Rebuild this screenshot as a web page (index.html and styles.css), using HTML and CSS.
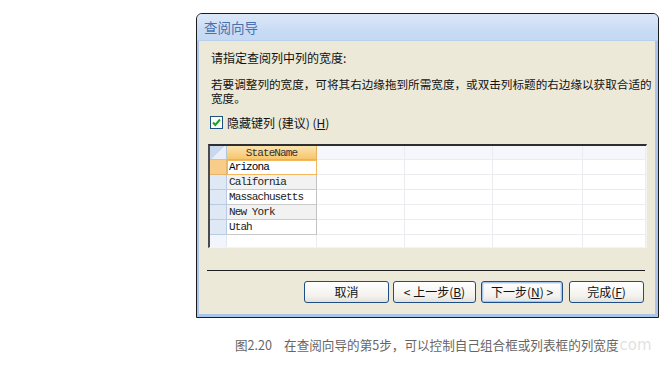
FILE: index.html
```html
<!DOCTYPE html>
<html lang="zh-CN">
<head>
  <meta charset="UTF-8">
  <title>查阅向导</title>
  <link rel="stylesheet" href="styles.css">
</head>
<body>

<div class="page">
  <div class="dialog">
    <div class="titlebar">查阅向导</div>
    <div class="content">
      <p class="line1">请指定查阅列中列的宽度:</p>
      <p class="line2">若要调整列的宽度，可将其右边缘拖到所需宽度，或双击列标题的右边缘以获取合适的<br>宽度。</p>

      <div class="check-row">
        <span class="checkbox">
          <svg width="11" height="11" viewBox="0 0 11 11"><path d="M2 5.5 L4.3 8 L9 2.5" fill="none" stroke="#21a121" stroke-width="2"/></svg>
        </span>
        <span>隐藏键列 (建议) (<u>H</u>)</span>
      </div>

      <div class="grid">
        <div class="row head">
          <div class="cell sel corner"></div>
          <div class="cell c1 colhead">StateName</div>
          <div class="cell c2"></div>
          <div class="cell c3"></div>
          <div class="cell c4"></div>
          <div class="cell c5"></div>
        </div>
        <div class="row">
          <div class="cell sel current"></div>
          <div class="cell c1 data active">Arizona</div>
          <div class="cell c2"></div><div class="cell c3"></div><div class="cell c4"></div><div class="cell c5"></div>
        </div>
        <div class="row">
          <div class="cell sel"></div>
          <div class="cell c1 data alt">California</div>
          <div class="cell c2"></div><div class="cell c3"></div><div class="cell c4"></div><div class="cell c5"></div>
        </div>
        <div class="row">
          <div class="cell sel"></div>
          <div class="cell c1 data">Massachusetts</div>
          <div class="cell c2"></div><div class="cell c3"></div><div class="cell c4"></div><div class="cell c5"></div>
        </div>
        <div class="row">
          <div class="cell sel"></div>
          <div class="cell c1 data alt">New York</div>
          <div class="cell c2"></div><div class="cell c3"></div><div class="cell c4"></div><div class="cell c5"></div>
        </div>
        <div class="row">
          <div class="cell sel"></div>
          <div class="cell c1 data">Utah</div>
          <div class="cell c2"></div><div class="cell c3"></div><div class="cell c4"></div><div class="cell c5"></div>
        </div>
        <div class="row">
          <div class="cell sel blank"></div>
          <div class="cell c1"></div>
          <div class="cell c2"></div><div class="cell c3"></div><div class="cell c4"></div><div class="cell c5"></div>
        </div>
      </div>

      <div class="separator"></div>

      <div class="buttons">
        <button class="btn b-cancel">取消</button>
        <button class="btn b-back">&lt; 上一步(<u>B</u>)</button>
        <button class="btn b-next focus">下一步(<u>N</u>) &gt;</button>
        <button class="btn b-finish">完成(<u>F</u>)</button>
      </div>
    </div>
  </div>

  <p class="caption">图2.20<span class="gap"></span>在查阅向导的第5步，可以控制自己组合框或列表框的列宽度<span class="mark">com</span></p>
</div>

</body>
</html>
```

FILE: styles.css
```css
body {
  margin: 0;
  background: #ffffff;
  font-family: "Noto Sans CJK SC", "DejaVu Sans", sans-serif;
}
.page {
  padding: 13px 0 0 196px;
}
.dialog {
  width: 456px;
  border: 1px solid #1c1c1c;
  border-radius: 6px 6px 0 0;
  background: #a9c5ec;
  padding: 0 3px 3px 2px;
}
.titlebar {
  height: 26px;
  margin: 0 -3px 0 -2px;
  padding-left: 7px;
  border-radius: 5px 5px 0 0;
  border-bottom: 1px solid #b8cfee;
  background: linear-gradient(#dce8f9, #cadcf5 60%, #c5d9f3);
  color: #4a70ae;
  font-size: 13.5px;
  line-height: 27px;
}
.content {
  height: 273px;
  background: #ece9d8;
  color: #111;
  font-size: 12px;
  overflow: hidden;
}
.content p {
  margin: 0;
  line-height: 14px;
}
.line1 {
  padding: 10px 0 0 12px;
}
.line2 {
  padding: 12px 0 0 12px;
  font-size: 11.6px;
  line-height: 14px;
}
.check-row {
  display: flex;
  align-items: center;
  gap: 4px;
  height: 15px;
  margin: 10px 0 0 11px;
  line-height: 15px;
}
.checkbox {
  display: flex;
  align-items: center;
  justify-content: center;
  width: 11px;
  height: 11px;
  border: 1px solid #1c5180;
  background: #fbfbf8;
}

.grid {
  width: 436px;
  height: 101px;
  margin: 14px 0 0 9px;
  border-top: 2px solid #2e2e2e;
  border-left: 2px solid #4a4a4a;
  border-right: 1px solid #f4f4f4;
  border-bottom: 1px solid #f4f4f4;
  background: #ffffff;
  overflow: hidden;
}
.row {
  display: flex;
  height: 15px;
}
.row.head {
  height: 14px;
}
.cell {
  box-sizing: border-box;
  height: 100%;
  border-right: 1px solid #ececf0;
  border-bottom: 1px solid #ececf0;
  font-family: "Liberation Mono", monospace;
  font-size: 11px;
  letter-spacing: -0.9px;
  line-height: 14px;
  white-space: nowrap;
  overflow: hidden;
}
.sel { width: 17px; background: #dfe8f5; border-color: #b9cbe2; }
.c1 { width: 90px; }
.c2 { width: 88px; }
.c3 { width: 88px; }
.c4 { width: 90px; }
.c5 { flex: 1; }
.head .cell { background: #f5f7fd; }
.head .corner {
  background: linear-gradient(135deg, #c9d8ee 0 50%, #e9eff8 50%);
  border-color: #b4c6df;
}
.head .colhead {
  background: linear-gradient(#fbe3ae, #f6c66d);
  border-color: #e5b25e;
  color: #333;
  text-align: center;
}
.sel.current { background: #f8cd8a; border-color: #e8b469; }
.sel.blank { background: #f2f5fb; border-color: #e3e8f0; }
.data {
  padding-left: 2px;
  color: #222;
  border-right-color: #c2c2c2;
  border-bottom-color: #c9c9c9;
}
.data.alt { background: #f2f2f2; }
.data.active {
  border: 1px solid #f5b75c;
  padding-left: 1px;
  line-height: 12px;
  color: #000;
}

.separator {
  width: 438px;
  height: 1px;
  margin: 22px 0 0 8px;
  background: #1e1e1e;
}
.buttons {
  display: flex;
  justify-content: flex-end;
  gap: 4px;
  margin-top: 10px;
  padding-right: 11px;
}
.btn {
  height: 22px;
  padding: 0;
  border: 1px solid #1f4d86;
  border-radius: 3px;
  background: linear-gradient(#ffffff, #f3f2ee 70%, #e3e1d8);
  color: #111;
  font-family: "Noto Sans CJK SC", "DejaVu Sans", sans-serif;
  font-size: 12px;
  line-height: 20px;
}
.btn.focus {
  box-shadow: inset 0 0 0 1px #a9c3ec, inset 0 0 0 2px #dbe6f7;
}
.b-cancel { width: 85px; }
.b-back { width: 83px; }
.b-next { width: 82px; margin-left: 1px; }
.b-finish { width: 75px; margin-left: 2px; }

.caption {
  margin: 19px 0 0 39px;
  color: #666;
  font-size: 12.6px;
  line-height: 16px;
}
.gap {
  display: inline-block;
  width: 12px;
}
.mark {
  margin-left: 1px;
  color: #e2e2e2;
  font-family: "DejaVu Sans", sans-serif;
  font-size: 15px;
}
```
